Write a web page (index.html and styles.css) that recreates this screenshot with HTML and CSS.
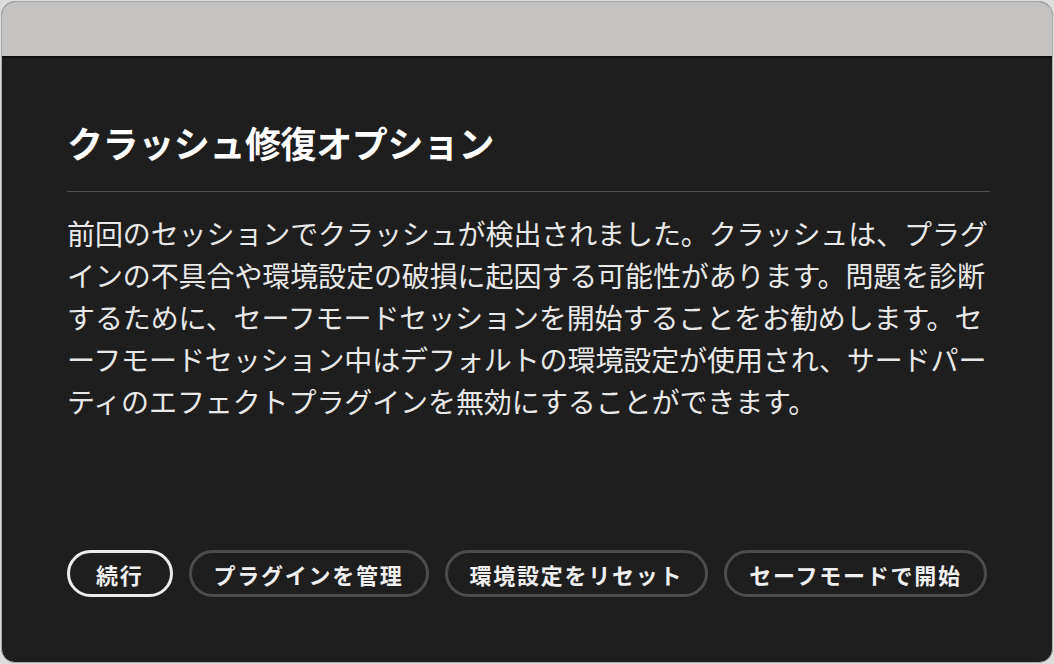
FILE: index.html
```html
<!DOCTYPE html>
<html lang="ja">
<head>
    <meta charset="UTF-8">
    <meta name="viewport" content="width=device-width, initial-scale=1.0">
    <title>クラッシュ修復オプション</title>
    <link rel="stylesheet" href="styles.css">
</head>
<body>

    <div class="window">
        <div class="titlebar"></div>

        <div class="dialog">
            <h1 class="dialog-title">クラッシュ修復オプション</h1>

            <p class="dialog-text">前回のセッションでクラッシュが検出されました。クラッシュは、プラグインの不具合や環境設定の破損に起因する可能性があります。問題を診断するために、セーフモードセッションを開始することをお勧めします。セーフモードセッション中はデフォルトの環境設定が使用され、サードパーティのエフェクトプラグインを無効にすることができます。</p>

            <div class="actions">
                <button type="button" class="btn btn-primary">続行</button>
                <button type="button" class="btn">プラグインを管理</button>
                <button type="button" class="btn">環境設定をリセット</button>
                <button type="button" class="btn">セーフモードで開始</button>
            </div>
        </div>
    </div>

</body>
</html>
```

FILE: styles.css
```css
html, body {
    height: 100%;
}

body {
    font-family: "Noto Sans CJK JP", "Noto Sans", sans-serif;
    background-color: #dcdcdc;
    margin: 0;
    padding: 1px;
    box-sizing: border-box;
}

.window {
    height: 100%;
    display: flex;
    flex-direction: column;
    background-color: #1e1e1e;
    border: 1px solid #a9a9a9;
    border-radius: 14px;
    overflow: hidden;
    box-sizing: border-box;
}

.titlebar {
    height: 54px;
    flex-shrink: 0;
    background-color: #c4c3c1;
    border-bottom: 2px solid #0e0e0e;
}

.dialog {
    flex: 1;
    display: flex;
    flex-direction: column;
    padding: 62px 62px 65px 65px;
}

.dialog-title {
    margin: 0;
    padding-bottom: 27px;
    border-bottom: 1px solid #4e4e4e;
    font-size: 36px;
    line-height: 44px;
    letter-spacing: -0.4px;
    font-weight: bold;
    color: #ffffff;
}

.dialog-text {
    margin: 20px 0 0;
    font-size: 28px;
    line-height: 42px;
    letter-spacing: -0.1px;
    color: #e8e8e8;
}

.actions {
    margin-top: auto;
    display: flex;
    gap: 16px;
}

.btn {
    font-family: inherit;
    font-size: 22px;
    font-weight: bold;
    letter-spacing: 1.75px;
    color: #efefef;
    background-color: transparent;
    border: 3px solid #4c4c4c;
    border-radius: 24px;
    height: 47px;
    padding: 0 22px;
    line-height: 1;
    cursor: pointer;
}

.btn-primary {
    border-color: #ececec;
    padding: 0 26px;
}
```
